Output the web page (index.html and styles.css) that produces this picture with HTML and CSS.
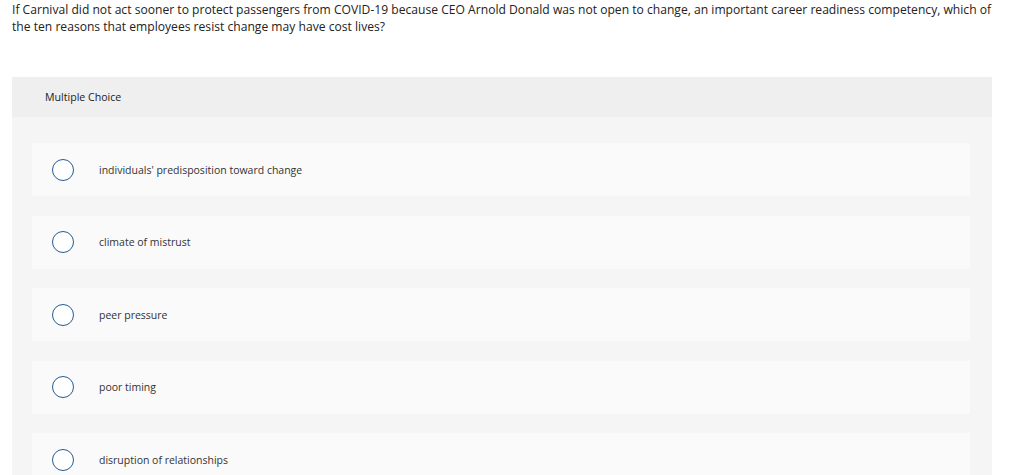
FILE: index.html
```html
<!DOCTYPE html>
<html>
<head>
<meta charset="utf-8">
<link rel="stylesheet" href="styles.css">
</head>
<body>
<div class="page">
  <p class="question">If Carnival did not act sooner to protect passengers from COVID-19 because CEO Arnold Donald was not open to change, an important career readiness competency, which of the ten reasons that employees resist change may have cost lives?</p>
  <section class="panel">
    <div class="panel-head">Multiple Choice</div>
    <div class="panel-body">
      <label class="option"><span class="radio"></span><span class="opt-text">individuals' predisposition toward change</span></label>
      <label class="option"><span class="radio"></span><span class="opt-text">climate of mistrust</span></label>
      <label class="option"><span class="radio"></span><span class="opt-text">peer pressure</span></label>
      <label class="option"><span class="radio"></span><span class="opt-text">poor timing</span></label>
      <label class="option"><span class="radio"></span><span class="opt-text">disruption of relationships</span></label>
    </div>
  </section>
</div>
</body>
</html>
```
FILE: styles.css
```css
* { box-sizing: border-box; }
html, body { margin: 0; padding: 0; background: #fff; }
body { font-family: "Open Sans", sans-serif; color: #222; }
.page { padding: 1px 32px 0 12px; }
.question { margin: 0; font-size: 12.1px; letter-spacing: 0.01px; line-height: 17px; color: #222; }
.panel { margin-top: 42px; width: 980px; }
.panel-head { height: 40px; background: #efefef; padding-left: 33px; display: flex; align-items: center; font-size: 10.6px; color: #222; }
.panel-body { background: #f5f5f5; padding: 26px 22px 20px 20px; display: flex; flex-direction: column; gap: 19.5px; }
.option { height: 53px; background: #fafafa; display: flex; align-items: center; padding-left: 20px; }
.radio { width: 22px; height: 22px; border-radius: 50%; border: 1.3px solid #245b94; background: #fff; flex: none; }
.opt-text { margin-left: 25px; font-size: 10.5px; color: #333; }
```
